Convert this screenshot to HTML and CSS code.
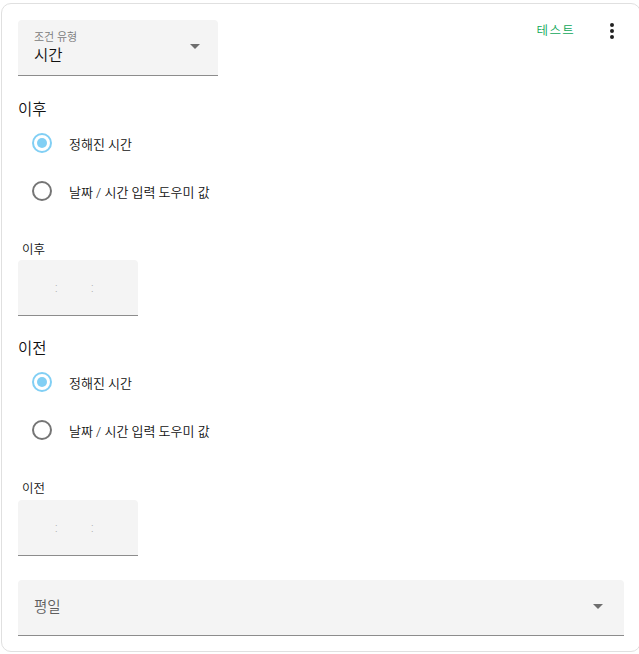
FILE: index.html
```html
<!DOCTYPE html>
<html lang="ko">
<head>
<meta charset="utf-8">
<link rel="stylesheet" href="styles.css">
</head>
<body>
<div class="card">
  <div class="card-menu">
    <span class="test-btn">테스트</span>
    <span class="kebab">
      <svg width="24" height="24" viewBox="0 0 24 24"><path fill="#212121" d="M12,16A2,2 0 0,1 14,18A2,2 0 0,1 12,20A2,2 0 0,1 10,18A2,2 0 0,1 12,16M12,10A2,2 0 0,1 14,12A2,2 0 0,1 12,14A2,2 0 0,1 10,12A2,2 0 0,1 12,10M12,4A2,2 0 0,1 14,6A2,2 0 0,1 12,8A2,2 0 0,1 10,6A2,2 0 0,1 12,4Z"/></svg>
    </span>
  </div>

  <div class="select small">
    <div class="select-text">
      <span class="select-label">조건 유형</span>
      <span class="select-value">시간</span>
    </div>
    <span class="arrow"></span>
  </div>

  <div class="section first">
    <div class="heading">이후</div>
    <div class="radio-row"><span class="radio checked"></span><span class="radio-label">정해진 시간</span></div>
    <div class="radio-row"><span class="radio"></span><span class="radio-label">날짜 / 시간 입력 도우미 값</span></div>
    <div class="time-label">이후</div>
    <div class="time-box"><span class="colon">:</span><span class="colon">:</span></div>
  </div>

  <div class="section second">
    <div class="heading">이전</div>
    <div class="radio-row"><span class="radio checked"></span><span class="radio-label">정해진 시간</span></div>
    <div class="radio-row"><span class="radio"></span><span class="radio-label">날짜 / 시간 입력 도우미 값</span></div>
    <div class="time-label second-label">이전</div>
    <div class="time-box"><span class="colon">:</span><span class="colon">:</span></div>
  </div>

  <div class="select wide">
    <div class="select-text">
      <span class="weekday">평일</span>
    </div>
    <span class="arrow"></span>
  </div>
</div>
</body>
</html>
```

FILE: styles.css
```css
* { box-sizing: border-box; }
html, body { margin: 0; padding: 0; background: #fff; }
body {
  font-family: Roboto, "Noto Sans CJK KR", sans-serif;
  color: #212121;
  width: 639px;
  height: 654px;
  overflow: hidden;
  font-weight: 350;
}
.card {
  position: relative;
  margin: 3px 0 0 1px;
  width: 640px;
  height: 649px;
  border: 1px solid #e0e0e0;
  border-radius: 10px;
  padding: 16px 0 0 16px;
}
.card-menu {
  position: absolute;
  top: 15px;
  right: 16px;
  display: flex;
  align-items: center;
}
.test-btn {
  color: #0fa85a;
  font-size: 12.5px;
  letter-spacing: 1.3px;
  margin-right: 25px;
  line-height: 24px;
}
.kebab { display: flex; width: 24px; height: 24px; margin-right: 0; }

.select {
  display: flex;
  align-items: center;
  height: 56px;
  background: #f4f4f4;
  border-radius: 4px 4px 0 0;
  border-bottom: 1px solid #8c8c8c;
  padding: 0 18px 0 16px;
}
.select.small { width: 200px; }
.select.wide { width: 606px; margin-top: 24px; }
.select-text { flex: 1; display: flex; flex-direction: column; }
.select-label { font-size: 11px; color: #7a7a7a; line-height: 14px; margin-top: 2px; }
.select-value { font-size: 15.5px; color: #111; line-height: 22px; }
.weekday { font-size: 14.5px; color: #5e5e5e; line-height: 20px; }
.arrow {
  width: 0; height: 0;
  border-left: 5px solid transparent;
  border-right: 5px solid transparent;
  border-top: 5px solid #6e6e6e;
  margin-bottom: 2px;
}
.select.wide .arrow { margin-right: 3px; }

.section.first { margin-top: 20px; }
.section.second { margin-top: 19px; }
.heading { font-size: 15.5px; padding-top: 4px; line-height: 20px; color: #111; }
.radio-row {
  display: flex;
  align-items: center;
  height: 48px;
  margin-top: -1px;
  margin-bottom: 1px;
}
.radio {
  width: 20px; height: 20px;
  border: 2px solid #757575;
  border-radius: 50%;
  margin-left: 14px;
  position: relative;
  flex: none;
}
.radio.checked { border-color: #81cff4; }
.radio.checked::after {
  content: "";
  position: absolute;
  left: 3px; top: 3px;
  width: 10px; height: 10px;
  border-radius: 50%;
  background: #81cff4;
}
.radio-label { font-size: 13px; margin-left: 17px; color: #111; }
.time-label {
  font-size: 12.5px;
  line-height: 16px;
  margin: 27px 0 2px 4px;
  color: #111;
}
.time-label.second-label { margin-bottom: 3px; }
.time-box {
  width: 120px;
  height: 56px;
  background: #f4f4f4;
  border-radius: 4px 4px 0 0;
  border-bottom: 1px solid #8c8c8c;
  display: flex;
  align-items: center;
  padding-left: 37px;
  gap: 32px;
}
.colon { color: #a8a8a8; font-size: 12px; line-height: 16px; width: 4px; }
```
